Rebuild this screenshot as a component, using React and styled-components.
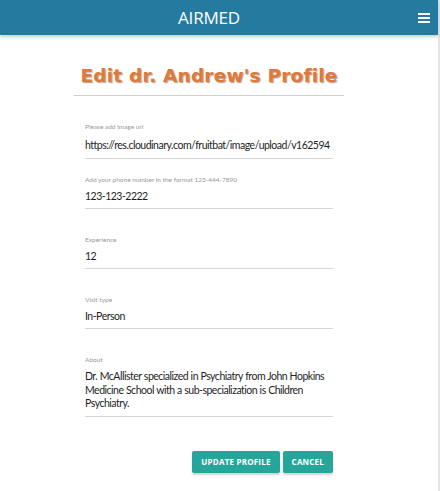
import React from 'react'
import styled, { createGlobalStyle } from 'styled-components'

const GlobalStyle = createGlobalStyle`
  html, body {
    margin: 0;
    padding: 0;
    background: #fff;
    font-family: "Lato", "Open Sans", sans-serif;
  }
`

const Page = styled.div`
  width: 438px;
  min-height: 491px;
  border-right: 2px solid #e4e4e4;
`

const Nav = styled.nav`
  height: 35px;
  background: #247b9f;
  box-shadow: 0 2px 3px rgba(0, 0, 0, 0.2);
  display: flex;
  align-items: center;
  padding: 0 8px 0 0;
`

const Brand = styled.div`
  flex: 1;
  text-align: center;
  color: #fff;
  font-family: "Open Sans", "Noto Sans", sans-serif;
  font-size: 17px;
  letter-spacing: -0.2px;
`

const Burger = styled.div`
  width: 12px;
  display: flex;
  flex-direction: column;
  gap: 2px;
  span {
    height: 2px;
    background: #fff;
  }
`

const Main = styled.main`
  display: flex;
  flex-direction: column;
  align-items: center;
  padding-right: 20px;
`

const Title = styled.h1`
  margin: 30px 0 0;
  width: 270px;
  text-align: center;
  color: #e07a3c;
  font-family: "DejaVu Sans", sans-serif;
  font-weight: bold;
  font-size: 18.5px;
  line-height: 22px;
  letter-spacing: 0.2px;
  text-shadow: 1px 1px 1px rgba(80, 40, 10, 0.45);
  padding-bottom: 8px;
  border-bottom: 1px solid #cfcfcf;
`

const Form = styled.form`
  width: 248px;
  margin-top: 26px;
  display: flex;
  flex-direction: column;
`

const Field = styled.div`
  margin-top: ${p => p.gap}px;
  border-bottom: 1px solid #d6d6d6;
  display: flex;
  flex-direction: column;
`

const Label = styled.label`
  font-size: 6.5px;
  color: #9a9a9a;
  line-height: 9px;
`

const Value = styled.div`
  margin-top: ${p => p.top || 5}px;
  padding-bottom: ${p => p.bottom || 4}px;
  font-size: 10.5px;
  letter-spacing: -0.5px;
  word-spacing: 0.3px;
  color: #1e1e1e;
  line-height: ${p => p.lh || 15}px;
  white-space: ${p => (p.wrap ? 'normal' : 'nowrap')};
  overflow: hidden;
`

const Actions = styled.div`
  margin-top: 34px;
  display: flex;
  justify-content: flex-end;
  gap: 3px;
`

const Button = styled.button`
  height: 22px;
  padding: 0 ${p => p.pad}px;
  border: none;
  border-radius: 2px;
  background: #26a69a;
  color: #fff;
  font-family: "Open Sans", "Noto Sans", sans-serif;
  font-weight: bold;
  font-size: 8px;
  letter-spacing: 0.2px;
  box-shadow: 0 2px 2px rgba(0, 0, 0, 0.18);
`

const fields = [
  { label: 'Please add image url', value: 'https://res.cloudinary.com/fruitbat/image/upload/v162594', gap: 0, top: 7, bottom: 5 },
  { label: 'Add your phone number in the format 123-444-7890', value: '123-123-2222', gap: 16 },
  { label: 'Experience', value: '12', gap: 26 },
  { label: 'Visit type', value: 'In-Person', gap: 26 },
]

export default function App() {
  return (
    <>
      <GlobalStyle />
      <Page>
        <Nav>
          <Brand>AIRMED</Brand>
          <Burger>
            <span />
            <span />
            <span />
          </Burger>
        </Nav>
        <Main>
          <Title>Edit dr. Andrew's Profile</Title>
          <Form>
            {fields.map(f => (
              <Field key={f.label} gap={f.gap}>
                <Label>{f.label}</Label>
                <Value top={f.top} bottom={f.bottom}>{f.value}</Value>
              </Field>
            ))}
            <Field gap={26}>
              <Label>About</Label>
              <Value wrap lh={13.5} top={6} bottom={5}>
                Dr. McAllister specialized in Psychiatry from John Hopkins Medicine School with a sub-specialization is Children Psychiatry.
              </Value>
            </Field>
            <Actions>
              <Button type="button" pad={9}>UPDATE PROFILE</Button>
              <Button type="button" pad={9}>CANCEL</Button>
            </Actions>
          </Form>
        </Main>
      </Page>
    </>
  )
}
